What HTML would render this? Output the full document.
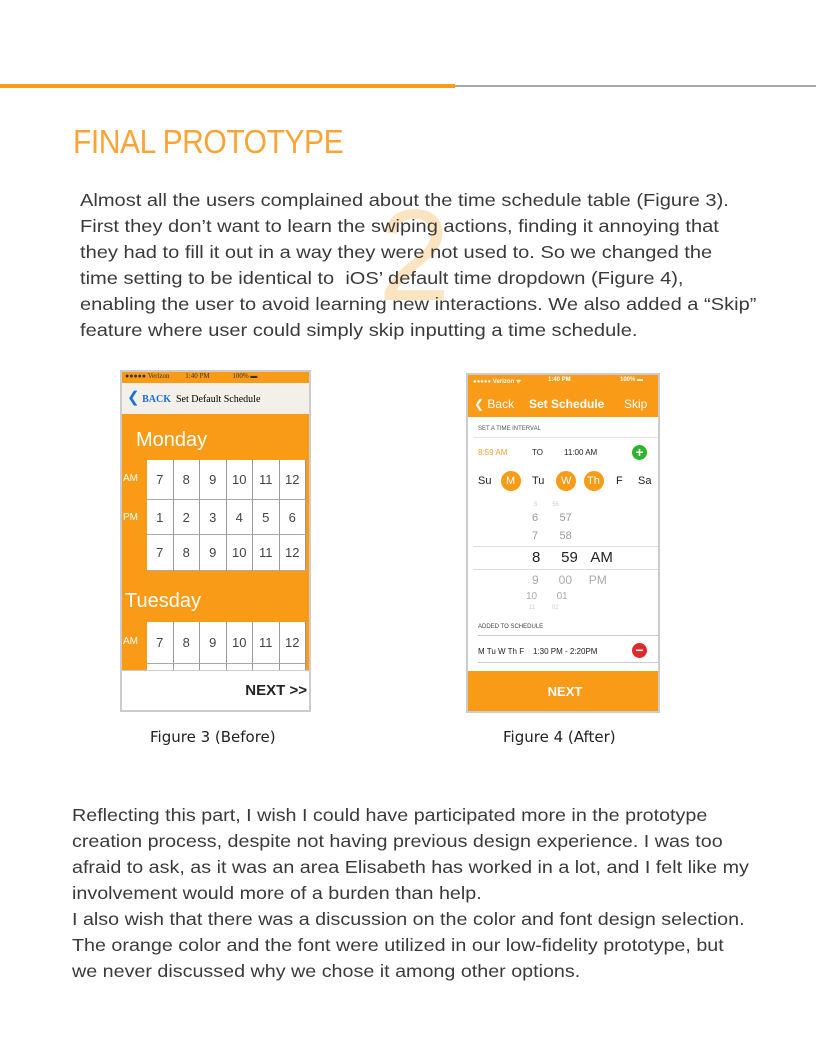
<!DOCTYPE html>
<html><head><meta charset="utf-8"><style>
*{margin:0;padding:0;box-sizing:border-box}
body{width:816px;height:1056px;background:#fff;position:relative;overflow:hidden;font-family:"Liberation Sans",sans-serif}
.a{position:absolute;white-space:nowrap}
.p{font-size:17.6px;color:#3a3a3a;line-height:26px;position:absolute;white-space:nowrap;transform:scaleX(1.14);transform-origin:0 0}
.c{position:absolute;background:#fff;border-right:1px solid #999;border-bottom:1px solid #aaa;text-align:center;color:#444;font-size:13px}
</style></head><body>
<div class="a" style="left:0;top:84px;width:455px;height:4px;background:#f99b16"></div>
<div class="a" style="left:455px;top:85px;width:361px;height:2px;background:#a9a9a9"></div>
<div class="a" style="left:73px;top:123px;font-size:33px;color:#f9a535;letter-spacing:-0.5px;transform:scaleX(0.91);transform-origin:0 0">FINAL PROTOTYPE</div>
<div class="a" style="left:378px;top:180px;font-size:130px;color:#fbd9a8;opacity:.7">2</div>
<div class="p" style="left:80px;top:187px">Almost all the users complained about the time schedule table (Figure 3).<br>First they don’t want to learn the swiping actions, finding it annoying that<br>they had to fill it out in a way they were not used to. So we changed the<br>time setting to be identical to &nbsp;iOS’ default time dropdown (Figure 4),<br>enabling the user to avoid learning new interactions. We also added a “Skip”<br>feature where user could simply skip inputting a time schedule.</div>

<!-- phone 1 -->
<div class="a" style="left:120px;top:370px;width:191px;height:342px;background:#f99b16;border:2px solid #ccc;overflow:hidden">
<div class="a" style="left:0;top:0;width:191px;height:10px;font-size:7px;color:#333;padding-left:3px;font-family:'Liberation Serif',serif">●●●●● Verizon &nbsp;&nbsp;&nbsp;&nbsp;&nbsp;&nbsp;&nbsp;&nbsp;1:40 PM &nbsp;&nbsp;&nbsp;&nbsp;&nbsp;&nbsp;&nbsp;&nbsp;&nbsp;&nbsp;&nbsp;&nbsp;100% ▬</div>
<div class="a" style="left:0;top:11px;width:191px;height:31px;background:#f3f0ea;font-family:'Liberation Serif',serif;font-size:10px;line-height:31px;padding-left:5px"><span style="color:#1a6ed8;font-size:15px">❮</span><b style="color:#1a6ed8"> BACK</b> &nbsp;Set Default Schedule</div>
<div class="a" style="left:14px;top:57px;font-size:20px;color:#fff">Monday</div>
<div class="a" style="left:1px;top:101px;font-size:10px;color:#fff">AM</div>
<div class="a" style="left:1px;top:140px;font-size:10px;color:#fff">PM</div>
<div class="a" style="left:3px;top:218px;font-size:20px;color:#fff">Tuesday</div>
<div class="a" style="left:1px;top:264px;font-size:10px;color:#fff">AM</div>
<div id="g"></div>
<div class="a" style="left:0;top:298px;width:191px;height:42px;background:#fff;border-top:1px solid #ccc;text-align:right;padding-right:6px;font-weight:bold;font-size:15px;line-height:40px;color:#222">NEXT &gt;&gt;</div>
</div>

<!-- phone 2 -->
<div class="a" style="left:466px;top:373px;width:194px;height:340px;background:#fff;border:2px solid #ccc;overflow:hidden;font-family:'Liberation Sans',sans-serif">
<div class="a" style="left:0;top:0;width:194px;height:42px;background:#f99b16;color:#fff"></div>
<div class="a" style="left:5px;top:2px;font-size:6px;color:#fff;font-weight:bold">●●●●● Verizon ᯤ</div>
<div class="a" style="left:80px;top:2px;font-size:6px;color:#fff;font-weight:bold">1:40 PM</div>
<div class="a" style="left:152px;top:2px;font-size:6px;color:#fff;font-weight:bold">100% ▬</div>
<div class="a" style="left:6px;top:22px;font-size:12px;color:#fff">❮ Back</div>
<div class="a" style="left:61px;top:22px;font-size:12px;color:#fff;font-weight:bold">Set Schedule</div>
<div class="a" style="left:156px;top:22px;font-size:12px;color:#fff">Skip</div>
<div class="a" style="left:10px;top:51px;font-size:6px;color:#555">SET A TIME INTERVAL</div>
<div class="a" style="left:5px;top:62px;width:186px;height:1px;background:#e4e4e4"></div>
<div class="a" style="left:10px;top:73px;font-size:8px;color:#f0a030">8:59 AM</div>
<div class="a" style="left:64px;top:73px;font-size:8px;color:#222">TO</div>
<div class="a" style="left:96px;top:73px;font-size:8px;color:#222">11:00 AM</div>
<div class="a" style="left:164px;top:70px;width:15px;height:15px;border-radius:50%;background:#2cb52c;color:#fff;font-size:14px;line-height:14px;text-align:center;font-weight:bold">+</div>
<div class="a" style="left:33px;top:96px;width:20px;height:20px;border-radius:50%;background:#f99b16"></div>
<div class="a" style="left:88px;top:96px;width:20px;height:20px;border-radius:50%;background:#f99b16"></div>
<div class="a" style="left:116px;top:96px;width:20px;height:20px;border-radius:50%;background:#f99b16"></div>
<div class="a" style="left:10px;top:100px;font-size:11px;color:#222">Su</div>
<div class="a" style="left:38px;top:100px;font-size:11px;color:#fff">M</div>
<div class="a" style="left:64px;top:100px;font-size:11px;color:#222">Tu</div>
<div class="a" style="left:93px;top:100px;font-size:11px;color:#fff">W</div>
<div class="a" style="left:119px;top:100px;font-size:11px;color:#fff">Th</div>
<div class="a" style="left:148px;top:100px;font-size:11px;color:#222">F</div>
<div class="a" style="left:170px;top:100px;font-size:11px;color:#222">Sa</div>
<div class="a" style="left:66px;top:127px;font-size:6px;color:#ccc">5 &nbsp;&nbsp;&nbsp;&nbsp;&nbsp;&nbsp;&nbsp;&nbsp;56</div>
<div class="a" style="left:64px;top:137px;font-size:11px;color:#999">6 &nbsp;&nbsp;&nbsp;&nbsp;&nbsp;&nbsp;57</div>
<div class="a" style="left:64px;top:155px;font-size:11px;color:#999">7 &nbsp;&nbsp;&nbsp;&nbsp;&nbsp;&nbsp;58</div>
<div class="a" style="left:5px;top:171px;width:186px;height:1px;background:#ddd"></div>
<div class="a" style="left:64px;top:174px;font-size:15px;color:#222">8 &nbsp;&nbsp;&nbsp;&nbsp;59 &nbsp;&nbsp;AM</div>
<div class="a" style="left:5px;top:194px;width:186px;height:1px;background:#ddd"></div>
<div class="a" style="left:64px;top:198px;font-size:12px;color:#aaa">9 &nbsp;&nbsp;&nbsp;&nbsp;&nbsp;00 &nbsp;&nbsp;&nbsp;&nbsp;PM</div>
<div class="a" style="left:58px;top:216px;font-size:10px;color:#aaa">10 &nbsp;&nbsp;&nbsp;&nbsp;&nbsp;&nbsp;01</div>
<div class="a" style="left:61px;top:230px;font-size:6px;color:#ccc">11 &nbsp;&nbsp;&nbsp;&nbsp;&nbsp;&nbsp;&nbsp;&nbsp;&nbsp;02</div>
<div class="a" style="left:10px;top:249px;font-size:6px;color:#444">ADDED TO SCHEDULE</div>
<div class="a" style="left:10px;top:260px;width:180px;height:1px;background:#ccc"></div>
<div class="a" style="left:10px;top:272px;font-size:8px;color:#222">M Tu W Th F &nbsp;&nbsp;&nbsp;1:30 PM - 2:20PM</div>
<div class="a" style="left:164px;top:268px;width:15px;height:15px;border-radius:50%;background:#e02a2a;color:#fff;font-size:14px;line-height:14px;text-align:center;font-weight:bold">−</div>
<div class="a" style="left:10px;top:287px;width:180px;height:1px;background:#ccc"></div>
<div class="a" style="left:0;top:296px;width:194px;height:44px;background:#f99b16;color:#fff;font-weight:bold;font-size:13px;text-align:center;line-height:42px">NEXT</div>
</div>

<div class="a" style="left:150px;top:728px;font-size:15px;color:#222;font-family:'DejaVu Sans',sans-serif">Figure 3 (Before)</div>
<div class="a" style="left:503px;top:728px;font-size:15px;color:#222;font-family:'DejaVu Sans',sans-serif">Figure 4 (After)</div>

<div class="p" style="left:72px;top:802px;transform:scaleX(1.12)">Reflecting this part, I wish I could have participated more in the prototype<br>creation process, despite not having previous design experience. I was too<br>afraid to ask, as it was an area Elisabeth has worked in a lot, and I felt like my<br>involvement would more of a burden than help.<br>I also wish that there was a discussion on the color and font design selection.<br>The orange color and the font were utilized in our low-fidelity prototype, but<br>we never discussed why we chose it among other options.</div>

<script>
var g=document.getElementById('g'),h='';
var rows=[[88,40,['7','8','9','10','11','12']],[128,35,['1','2','3','4','5','6']],[163,36,['7','8','9','10','11','12']],[250,42,['7','8','9','10','11','12']],[292,10,['','','','','','']]];
rows.forEach(function(r){for(var i=0;i<6;i++){h+='<div class="c" style="left:'+(25+i*26.5)+'px;top:'+r[0]+'px;width:26.5px;height:'+r[1]+'px;line-height:'+r[1]+'px">'+r[2][i]+'</div>';}});
g.outerHTML=h;
</script>
</body></html>
